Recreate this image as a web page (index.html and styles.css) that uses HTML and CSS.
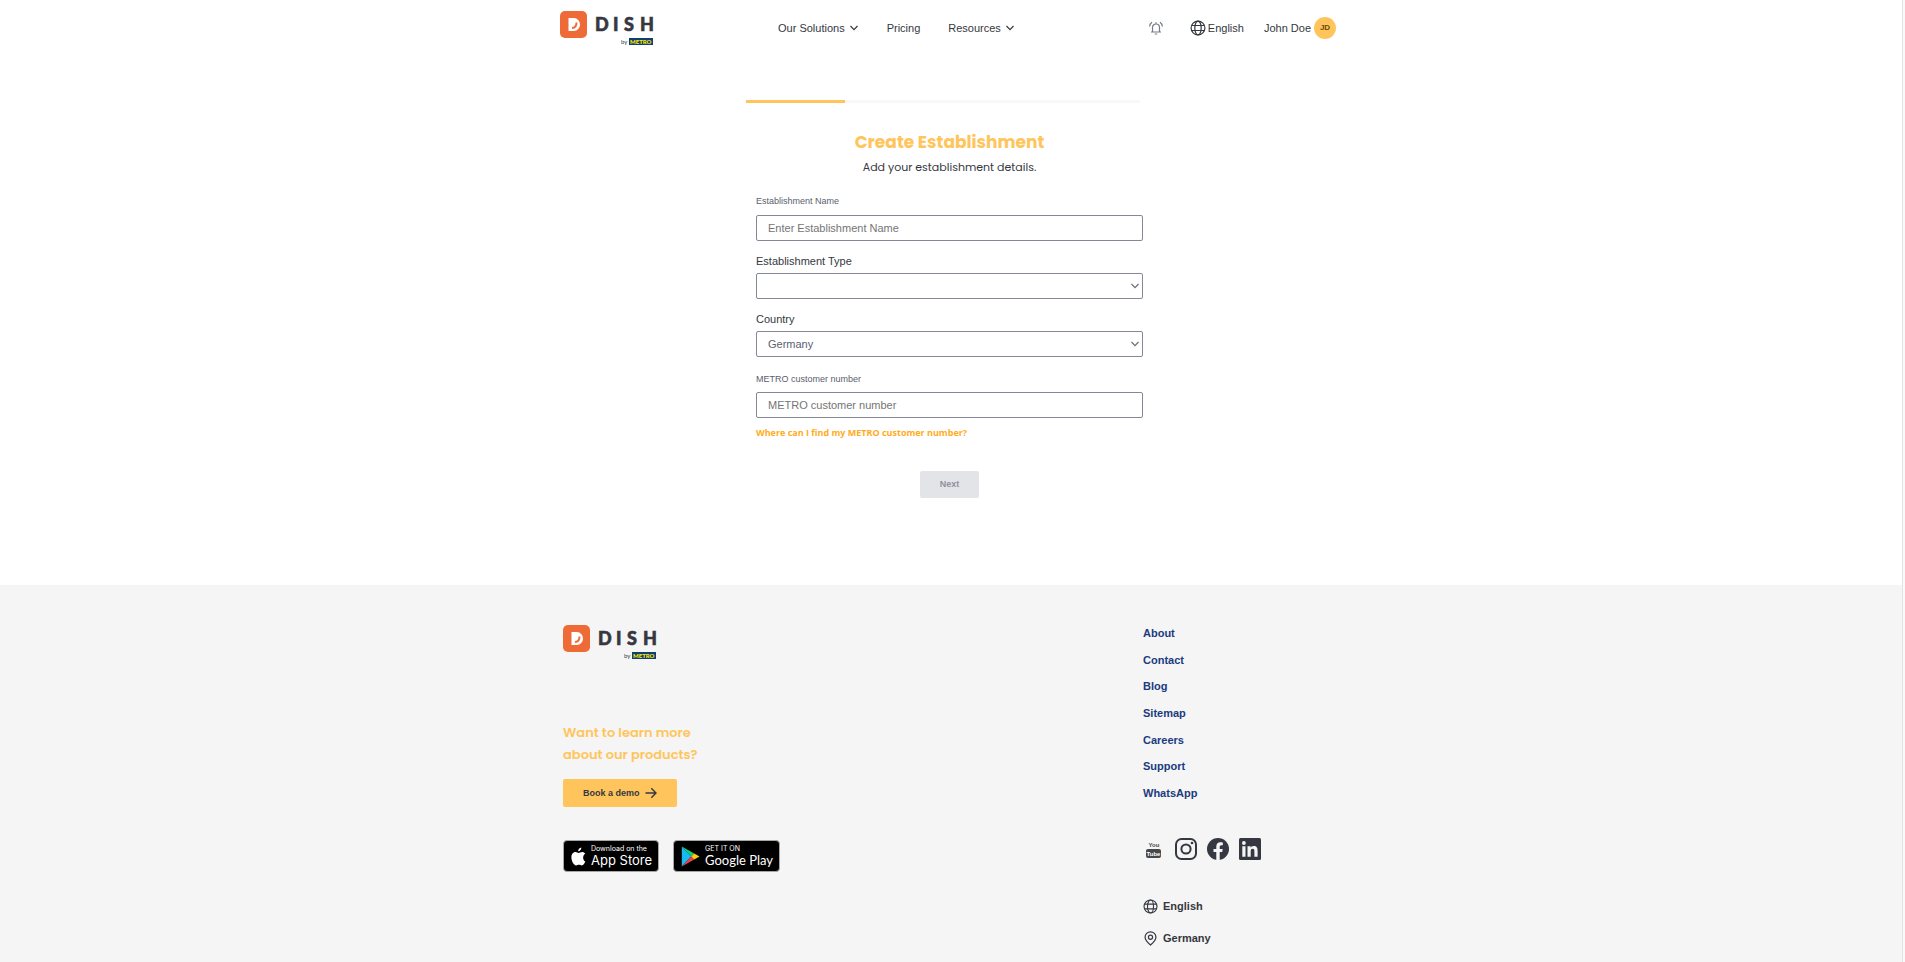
FILE: index.html
```html
<!DOCTYPE html>
<html lang="en">
<head>
<meta charset="utf-8">
<meta name="viewport" content="width=device-width, initial-scale=1">
<title>DISH - Create Establishment</title>
<link rel="stylesheet" href="styles.css">
</head>
<body>
<svg class="defs" aria-hidden="true">
  <symbol id="chevron" viewBox="0 0 10 10"><path d="M1.500 3l3.500 3.700L8.500 3" fill="none" stroke="currentColor" stroke-width="1.200"/></symbol>
  <symbol id="globe" viewBox="0 0 16 16"><g fill="none" stroke="currentColor" stroke-width="1.200"><circle cx="8" cy="8" r="6.900"/><ellipse cx="8" cy="8" rx="3.200" ry="6.900"/><path d="M1.700 5.500h12.600M1.700 10.500h12.600"/></g></symbol>
</svg>
<div class="page">
  <header class="header">
    <a class="logo" href="#" aria-label="DISH by METRO">
      <svg width="94" height="36" viewBox="0 0 94 36">
        <rect x="0" y="0" width="27" height="27" rx="5" fill="#ee6b37"/>
        <path d="M8.500 7h5.500a6 6.500 0 0 1 0 13h-5.500z" fill="#fff"/>
        <path d="M16.500 11.500c0 3.500-1.500 5.300-4.500 5.600" fill="none" stroke="#ee6b37" stroke-width="2"/>
        <text class="logo-word" x="35 53 64 80" y="20">DISH</text>
        <text class="logo-by" x="61" y="33">by</text>
        <rect x="69" y="27" width="24" height="7" fill="#10406f"/>
        <text class="logo-metro" x="70" y="33">METRO</text>
      </svg>
    </a>
    <nav class="nav">
      <button class="nav-item" type="button">Our Solutions <svg width="10" height="10"><use href="#chevron"/></svg></button>
      <a class="nav-item" href="#">Pricing</a>
      <button class="nav-item" type="button">Resources <svg width="10" height="10"><use href="#chevron"/></svg></button>
    </nav>
    <div class="account">
      <button class="bell" type="button" aria-label="Notifications">
        <svg width="14" height="14" viewBox="0 0 14 14" fill="none" stroke="currentColor" stroke-width="1.200"><path d="M2 11h10M3.500 11V6.500a3.500 3.500 0 0 1 7 0V11M7 3V1.300M5.800 13h2.400M.6 5.500C.8 3.500 1.600 2.200 3 1.200M13.400 5.500c-.2-2-1-3.300-2.400-4.300"/></svg>
      </button>
      <button class="language" type="button"><svg width="16" height="16"><use href="#globe"/></svg>English</button>
      <button class="user" type="button">John Doe <span class="avatar">JD</span></button>
    </div>
  </header>

  <main class="main">
    <div class="progress" role="progressbar" aria-label="Setup progress" aria-valuenow="25" aria-valuemin="0" aria-valuemax="100"><div class="progress-value"></div></div>
    <h1 class="title">Create Establishment</h1>
    <p class="subtitle">Add your establishment details.</p>
    <form class="form">
      <label class="label label-small" for="name">Establishment Name</label>
      <input class="control" id="name" type="text" placeholder="Enter Establishment Name">
      <label class="label" for="type">Establishment Type</label>
      <div class="select">
        <select class="control" id="type"><option></option></select>
        <svg class="select-arrow" width="10" height="10"><use href="#chevron"/></svg>
      </div>
      <label class="label" for="country">Country</label>
      <div class="select">
        <select class="control" id="country"><option>Germany</option></select>
        <svg class="select-arrow" width="10" height="10"><use href="#chevron"/></svg>
      </div>
      <label class="label label-small" for="customer">METRO customer number</label>
      <input class="control" id="customer" type="text" placeholder="METRO customer number">
      <a class="help" href="#">Where can I find my METRO customer number?</a>
      <button class="next" type="submit" disabled>Next</button>
    </form>
  </main>

  <footer class="footer">
    <div class="footer-inner">
      <div class="promo">
        <a class="logo" href="#" aria-label="DISH by METRO">
          <svg width="94" height="36" viewBox="0 0 94 36">
            <rect x="0" y="0" width="27" height="27" rx="5" fill="#ee6b37"/>
            <path d="M8.500 7h5.500a6 6.500 0 0 1 0 13h-5.500z" fill="#fff"/>
            <path d="M16.500 11.500c0 3.500-1.500 5.300-4.500 5.600" fill="none" stroke="#ee6b37" stroke-width="2"/>
            <text class="logo-word" x="35 53 64 80" y="20">DISH</text>
            <text class="logo-by" x="61" y="33">by</text>
            <rect x="69" y="27" width="24" height="7" fill="#10406f"/>
            <text class="logo-metro" x="70" y="33">METRO</text>
          </svg>
        </a>
        <h2 class="promo-title">Want to learn more<br>about our products?</h2>
        <a class="demo" href="#">Book a demo
          <svg width="12" height="12" viewBox="0 0 12 12" fill="none" stroke="currentColor" stroke-width="1.400"><path d="M.5 6h10.500M6.300 1.200L11 6l-4.700 4.800"/></svg>
        </a>
        <div class="stores">
          <a class="store" href="#">
            <svg width="15" height="19" viewBox="0 0 15 19" fill="#fff"><path d="M10.300.4c.1 1.900-1.200 3.700-3.100 3.800C7 2.400 8.500.6 10.300.4zM14.300 14.500c-.9 2.100-2 3.900-3.400 3.900-1.100 0-1.500-.7-2.900-.7s-1.900.7-2.900.7C2.700 18.400.4 14 .4 10.300c0-3.500 2.200-5.200 4.200-5.200 1.200 0 2.200.8 3 .8.800 0 2.100-.9 3.500-.9 1.200 0 2.400.7 3.100 1.700-3 1.900-2.500 6.500.1 7.800z"/></svg>
            <span class="store-text"><small>Download on the</small><span class="store-name">App Store</span></span>
          </a>
          <a class="store" href="#">
            <svg width="19" height="21" viewBox="0 0 19 21"><path d="M.8.500L10.200 10.500.8 20.500z" fill="#19b9f2"/><path d="M.8.500l12.400 6.900-3 3.100z" fill="#12d17b"/><path d="M.8 20.500l12.400-6.900-3-3.100z" fill="#f23b4d"/><path d="M13.200 7.400l5.300 3.100-5.300 3.100-3-3.100z" fill="#ffcb12"/></svg>
            <span class="store-text"><small>GET IT ON</small><span class="store-name google">Google Play</span></span>
          </a>
        </div>
      </div>
      <div class="side">
        <nav class="links" aria-label="Footer">
          <a href="#">About</a>
          <a href="#">Contact</a>
          <a href="#">Blog</a>
          <a href="#">Sitemap</a>
          <a href="#">Careers</a>
          <a href="#">Support</a>
          <a href="#">WhatsApp</a>
        </nav>
        <div class="social">
          <a href="#" aria-label="YouTube"><svg width="22" height="22" viewBox="0 0 22 22"><rect x="3" y="11" width="15" height="9" rx="2" fill="#45474b"/><text class="tube" x="11" y="9" fill="#45474b">You</text><text class="tube" x="10.500" y="18" fill="#fff">Tube</text></svg></a>
          <a href="#" aria-label="Instagram"><svg width="22" height="22" viewBox="0 0 22 22" fill="none" stroke="#353840" stroke-width="2"><rect x="1" y="1" width="20" height="20" rx="5.500"/><circle cx="11" cy="11" r="4.600"/><circle cx="17" cy="5" r="1.300" fill="#353840" stroke="none"/></svg></a>
          <a href="#" aria-label="Facebook"><svg width="22" height="22" viewBox="0 0 22 22"><circle cx="11" cy="11" r="11" fill="#353840"/><path d="M9.300 22v-8H6.500v-3.100h2.800V8.500c0-2.800 1.600-4.300 4.100-4.300.9 0 2 .2 2.400.3V7.200h-1.400c-1.300 0-1.700.8-1.700 1.700v2h3l-.5 3.100h-2.500v8z" fill="#f5f5f5"/></svg></a>
          <a href="#" aria-label="LinkedIn"><svg width="22" height="22" viewBox="0 0 22 22"><rect width="22" height="22" rx="1.500" fill="#353840"/><path d="M3.300 8.300h3.200v10.400H3.300zM8.500 8.300h3.100v1.400c.5-.9 1.600-1.700 3.100-1.700 3.200 0 3.900 2.100 3.900 4.900v5.800h-3.200v-5.200c0-1.200 0-2.800-1.700-2.800s-2 1.300-2 2.700v5.300H8.500z" fill="#f5f5f5"/><circle cx="4.900" cy="5" r="1.900" fill="#f5f5f5"/></svg></a>
        </div>
        <button class="locale" type="button"><svg width="15" height="15"><use href="#globe"/></svg>English</button>
        <button class="locale" type="button"><svg width="15" height="15" viewBox="0 0 16 16" fill="none" stroke="currentColor" stroke-width="1.300"><path d="M8 15C4.500 12 2.200 9.500 2.200 6.700a5.800 5.800 0 0 1 11.600 0C13.800 9.500 11.500 12 8 15z"/><circle cx="8" cy="6.700" r="2.200"/></svg>Germany</button>
      </div>
    </div>
  </footer>
</div>
</body>
</html>
```

FILE: styles.css
```css
* {
  box-sizing: border-box;
}

body {
  margin: 0;
  padding-right: 2px;
  background: #f9f9f9;
  color: #353840;
  font: 11px/16px "Liberation Sans", Arial, sans-serif;
}

button {
  padding: 0;
  border: 0;
  background: none;
  color: inherit;
  font: inherit;
}

a {
  color: inherit;
  text-decoration: none;
}

svg {
  display: block;
  flex: none;
}

.defs {
  position: absolute;
  width: 0;
  height: 0;
}

.page {
  display: flex;
  flex-direction: column;
  min-height: 100vh;
  border-right: 1px solid #e4e4e4;
  background: #fff;
}

/* Logo */
.logo-word {
  fill: #353840;
  stroke: #353840;
  stroke-width: 0.6px;
  font: 900 18px Lato, sans-serif;
}

.logo-by {
  fill: #353840;
  font: 6px Lato, sans-serif;
}

.logo-metro {
  fill: #ffe500;
  font: 900 6px Lato, sans-serif;
}

/* Header */
.header {
  display: flex;
  align-items: center;
  width: 100%;
  max-width: 782px;
  margin: 0 auto;
  padding: 11px 6px 0 0;
}

.nav {
  display: flex;
  gap: 28px;
  margin-left: 124px;
  padding-bottom: 2px;
}

.nav-item,
.language,
.user {
  display: flex;
  align-items: center;
}

.nav-item {
  gap: 4px;
}

.account {
  display: flex;
  align-items: center;
  margin-left: auto;
  padding-bottom: 2px;
}

.bell {
  margin-right: 27px;
  color: #777a88;
}

.language {
  gap: 2px;
  margin-right: 20px;
}

.user {
  gap: 3px;
}

.avatar {
  width: 22px;
  border-radius: 50%;
  background: #ffc55c;
  color: #6b4a0c;
  font-size: 8px;
  font-weight: 700;
  line-height: 22px;
}

/* Form */
.main {
  display: flex;
  flex-direction: column;
  align-items: center;
  padding: 53px 19px 87px 16px;
}

.progress {
  width: 100%;
  max-width: 394px;
  margin-right: 13px;
  background: #f8f8f8;
}

.progress-value {
  width: 25%;
  height: 3px;
  background: #ffc55c;
}

.title {
  margin: 27px 0 0;
  color: #ffc55c;
  font: 700 17px/24px Poppins, Inter, sans-serif;
}

.subtitle {
  margin: 5px 0 0;
  font: 11px/16px Poppins, Inter, sans-serif;
}

.form {
  display: flex;
  flex-direction: column;
  width: 100%;
  max-width: 387px;
  margin-top: 18px;
}

.label {
  margin: 12px 0 4px;
}

.label-small {
  margin: 14px 0 5px;
  color: #5b5e6d;
  font-size: 9px;
}

.label-small:first-child {
  margin: 0 0 6px;
}

.control {
  width: 100%;
  height: 26px;
  padding: 0 11px;
  border: 1px solid #858896;
  border-radius: 2px;
  background: #fff;
  color: #5b5e6d;
  font: inherit;
  appearance: none;
}

.control::placeholder {
  color: #757575;
}

.select {
  position: relative;
}

.select-arrow {
  position: absolute;
  top: 8px;
  right: 3px;
  color: #6b6e7a;
  pointer-events: none;
}

.help {
  align-self: flex-start;
  margin-top: 7px;
  color: #ffac1c;
  font: 700 9px/16px "Open Sans", "Noto Sans", sans-serif;
}

.next {
  align-self: center;
  margin-top: 30px;
  padding: 0 20px;
  border-radius: 2px;
  background: #e3e4e8;
  color: #8f919c;
  font-size: 9px;
  font-weight: 700;
  line-height: 27px;
}

/* Footer */
.footer {
  flex: 1;
  padding: 40px 0 16px;
  background: #f5f5f5;
}

.footer-inner {
  display: flex;
  justify-content: space-between;
  max-width: 776px;
  margin: 0 auto;
}

.promo-title {
  margin: 61px 0 13px;
  color: #ffc55c;
  font: 600 13px/22px Poppins, Inter, sans-serif;
}

.demo {
  display: inline-flex;
  align-items: center;
  gap: 5px;
  padding: 6px 20px;
  border-radius: 2px;
  background: #ffc55c;
  font-size: 9px;
  font-weight: 700;
}

.stores {
  display: flex;
  gap: 14px;
  margin-top: 33px;
}

.store {
  display: flex;
  align-items: center;
  gap: 5px;
  height: 32px;
  padding: 0 6px 0 7px;
  border: 1px solid #a6a6a6;
  border-radius: 4px;
  background: #000;
  color: #fff;
  font-family: Inter, sans-serif;
}

.store-text small {
  display: block;
  font-size: 7px;
  line-height: 9px;
}

.store-name {
  display: block;
  font-size: 13px;
  line-height: 15px;
}

.google {
  font-family: Lato, sans-serif;
}

.side {
  width: 196px;
}

.links {
  display: flex;
  flex-direction: column;
  justify-content: space-between;
  min-height: 176px;
  color: #1a3b7e;
  font-weight: 700;
}

.social {
  display: flex;
  gap: 10px;
  margin: 37px 0 38px;
}

.tube {
  font: 700 6px "Liberation Sans", Arial, sans-serif;
  text-anchor: middle;
}

.locale {
  display: flex;
  align-items: center;
  gap: 5px;
  margin-bottom: 16px;
  font-weight: 700;
}
```
